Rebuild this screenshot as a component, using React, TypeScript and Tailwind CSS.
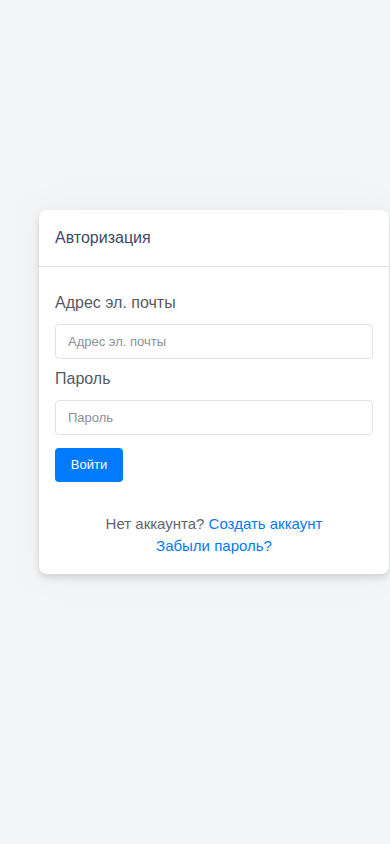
export default function App() {
  return (
    <div
      className="min-h-[844px] w-[390px] bg-[#f4f5f7] pt-[210px]"
      style={{ fontFamily: '"Liberation Sans", Arial, sans-serif' }}
    >
      {/* Login card */}
      <div className="ml-[39px] w-[350px] rounded-lg bg-white shadow-[0_4px_6px_rgba(0,0,0,0.12),0_0_40px_rgba(0,0,0,0.05)]">
        <div className="flex h-[57px] items-center border-b border-[#dfe1e6] px-4">
          <h1 className="text-[16px] text-[#3d4a68]">Авторизация</h1>
        </div>

        <form className="px-4 pt-[24px] pb-[17px]">
          <label className="block text-[16px] leading-6 text-[#555a62]">Адрес эл. почты</label>
          <input
            type="email"
            placeholder="Адрес эл. почты"
            className="mt-[9px] block h-[35px] w-full rounded border border-[#dee2e6] px-3 text-[13px] text-[#495057] outline-none placeholder:text-[#8a9099]"
          />

          <label className="mt-[8px] block text-[16px] leading-6 text-[#555a62]">Пароль</label>
          <input
            type="password"
            placeholder="Пароль"
            className="mt-[9px] block h-[35px] w-full rounded border border-[#dee2e6] px-3 text-[13px] text-[#495057] outline-none placeholder:text-[#8a9099]"
          />

          <button
            type="button"
            className="mt-[13px] h-[34px] w-[68px] rounded bg-[#007bff] text-[13px] text-white"
          >
            Войти
          </button>

          <div className="mt-[31px] text-center text-[15px] leading-[22px] text-[#5f656d]">
            <p>
              Нет аккаунта? <a className="text-[#007bff]">Создать аккаунт</a>
            </p>
            <p>
              <a className="text-[#007bff]">Забыли пароль?</a>
            </p>
          </div>
        </form>
      </div>
    </div>
  );
}
